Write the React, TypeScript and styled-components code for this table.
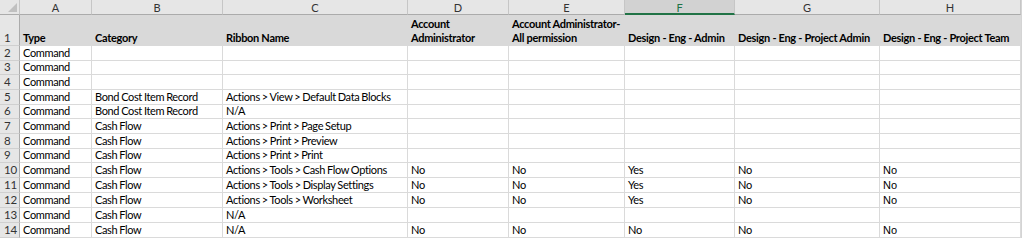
import { Fragment } from 'react';
import styled, { createGlobalStyle } from 'styled-components';

const GlobalStyle = createGlobalStyle`
	html, body {
		margin: 0;
		padding: 0;
		background: #ffffff;
	}
	body {
		font-family: Lato, 'Open Sans', sans-serif;
		font-size: 11px;
		color: #000;
	}
`;

const colWidths = [20, 72, 131, 185, 101, 116, 110, 145, 141];
const rowHeights = [15, 31, 15, 14, 15, 15, 14, 15, 15, 14, 15, 15, 15, 15, 15];

const Sheet = styled.div`
	display: grid;
	grid-template-columns: ${colWidths.map((w) => w + 'px').join(' ')};
	grid-template-rows: ${rowHeights.map((h) => h + 'px').join(' ')};
	width: 1021px;
	border-right: 1px solid #d4d4d4;
`;

const Corner = styled.div`
	background: #e6e6e6;
	border-right: 1px solid #c6c6c6;
	border-bottom: 1px solid #ababab;
	position: relative;
	overflow: hidden;

	&::after {
		content: '';
		position: absolute;
		right: 2px;
		bottom: 2px;
		border-style: solid;
		border-width: 0 0 9px 9px;
		border-color: transparent transparent #c0c0c0 transparent;
	}
`;

const ColHead = styled.div<{ $active?: boolean }>`
	background: ${(p) => (p.$active ? '#d2d2d2' : '#e6e6e6')};
	border-right: 1px solid #c6c6c6;
	border-bottom: ${(p) => (p.$active ? '2px solid #217346' : '1px solid #ababab')};
	color: ${(p) => (p.$active ? '#217346' : '#333')};
	font-size: 11px;
	display: flex;
	align-items: center;
	justify-content: center;
	line-height: 1;
	padding-top: 1px;
`;

const RowHead = styled.div`
	background: #e6e6e6;
	border-right: 1px solid #ababab;
	border-bottom: 1px solid #d0d0d0;
	color: #333;
	font-size: 11.5px;
	display: flex;
	align-items: flex-end;
	padding-left: 4px;
	line-height: 14px;
	letter-spacing: -0.2px;
`;

const Cell = styled.div<{ $head?: boolean; $arial?: boolean }>`
	position: relative;
	z-index: 1;
	background: ${(p) => (p.$head ? '#d9d9d9' : 'transparent')};
	border-right: 1px solid ${(p) => (p.$head ? '#d9d9d9' : '#dadada')};
	border-bottom: 1px solid ${(p) => (p.$head ? '#d9d9d9' : '#dadada')};
	font-weight: ${(p) => (p.$head ? 700 : 400)};
	font-family: ${(p) => (p.$arial ? "'Liberation Sans', Arial, sans-serif" : "Lato, 'Open Sans', sans-serif")};
	font-size: 11px;
	letter-spacing: ${(p) => (p.$arial ? '0' : p.$head ? '-0.3px' : '-0.35px')};
	word-spacing: ${(p) => (p.$arial || p.$head ? '0' : '-0.5px')};
	display: flex;
	flex-direction: column;
	justify-content: flex-end;
	padding: 0 2px 0 3px;
	line-height: 14px;
	white-space: nowrap;
	overflow: visible;
`;

const letters = ['A', 'B', 'C', 'D', 'E', 'F', 'G', 'H'];

const headers: string[][] = [
	['Type'],
	['Category'],
	['Ribbon Name'],
	['Account', 'Administrator'],
	['Account Administrator-', 'All permission'],
	['Design - Eng - Admin'],
	['Design - Eng - Project Admin'],
	['Design - Eng - Project Team'],
];

const rows: string[][] = [
	['Command', '', '', '', '', '', '', ''],
	['Command', '', '', '', '', '', '', ''],
	['Command', '', '', '', '', '', '', ''],
	['Command', 'Bond Cost Item Record', 'Actions > View > Default Data Blocks', '', '', '', '', ''],
	['Command', 'Bond Cost Item Record', 'N/A', '', '', '', '', ''],
	['Command', 'Cash Flow', 'Actions > Print > Page Setup', '', '', '', '', ''],
	['Command', 'Cash Flow', 'Actions > Print > Preview', '', '', '', '', ''],
	['Command', 'Cash Flow', 'Actions > Print > Print', '', '', '', '', ''],
	['Command', 'Cash Flow', 'Actions > Tools > Cash Flow Options', 'No', 'No', 'Yes', 'No', 'No'],
	['Command', 'Cash Flow', 'Actions > Tools > Display Settings', 'No', 'No', 'Yes', 'No', 'No'],
	['Command', 'Cash Flow', 'Actions > Tools > Worksheet', 'No', 'No', 'Yes', 'No', 'No'],
	['Command', 'Cash Flow', 'N/A', '', '', '', '', ''],
	['Command', 'Cash Flow', 'N/A', 'No', 'No', 'No', 'No', 'No'],
];

export default function App() {
	return (
		<>
			<GlobalStyle />
			<Sheet>
				<Corner />
				{letters.map((l) => (
					<ColHead key={l} $active={l === 'F'}>
						{l}
					</ColHead>
				))}
				<RowHead>1</RowHead>
				{headers.map((lines, i) => (
					<Cell key={'h' + i} $head>
						{lines.map((t) => (
							<span key={t}>{t}</span>
						))}
					</Cell>
				))}
				{rows.map((r, ri) => (
					<Fragment key={'r' + ri}>
						<RowHead>{ri + 2}</RowHead>
						{r.map((v, ci) => (
							<Cell key={ci} $arial={ci === 7}>
								{v}
							</Cell>
						))}
					</Fragment>
				))}
			</Sheet>
		</>
	);
}
